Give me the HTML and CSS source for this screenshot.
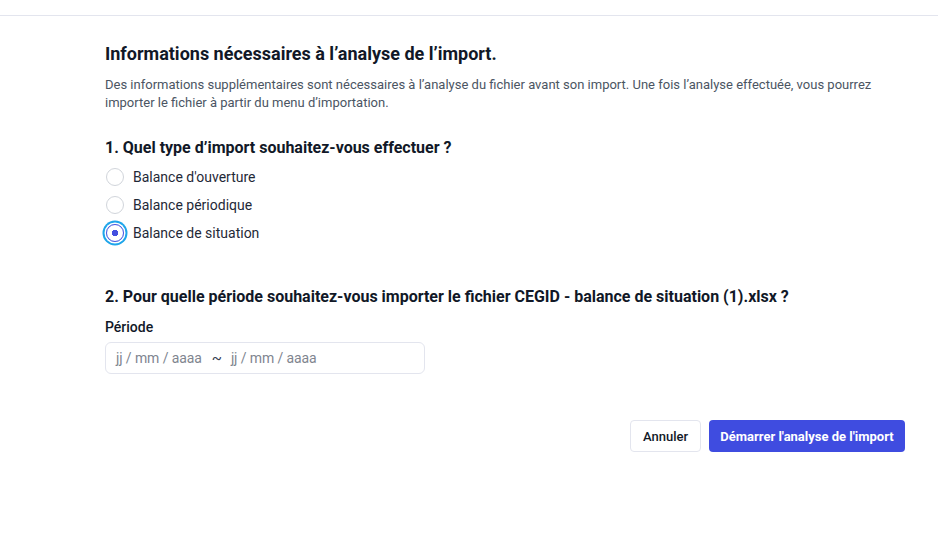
FILE: index.html
```html
<!DOCTYPE html>
<html lang="fr">
<head>
<meta charset="utf-8">
<link rel="stylesheet" href="styles.css">
</head>
<body>
<div class="topbar"></div>
<main class="content">
  <h1 class="title">Informations nécessaires à l’analyse de l’import.</h1>
  <p class="desc">Des informations supplémentaires sont nécessaires à l’analyse du fichier avant son import. Une fois l’analyse effectuée, vous pourrez importer le fichier à partir du menu d’importation.</p>

  <h2 class="q q1">1. Quel type d’import souhaitez-vous effectuer ?</h2>
  <div class="radios">
    <label class="radio"><span class="dot"></span>Balance d'ouverture</label>
    <label class="radio"><span class="dot"></span>Balance périodique</label>
    <label class="radio checked"><span class="dot"></span>Balance de situation</label>
  </div>

  <h2 class="q q2">2. Pour quelle période souhaitez-vous importer le fichier CEGID - balance de situation (1).xlsx ?</h2>
  <div class="field-label">Période</div>
  <div class="range">
    <span class="ph">jj / mm / aaaa</span>
    <span class="sep">~</span>
    <span class="ph">jj / mm / aaaa</span>
  </div>

  <div class="actions">
    <button class="btn btn-secondary">Annuler</button>
    <button class="btn btn-primary">Démarrer l'analyse de l'import</button>
  </div>
</main>
</body>
</html>
```
FILE: styles.css
```css
* { box-sizing: border-box; }
html, body { margin: 0; padding: 0; background: #fff; }
body { font-family: Roboto, "Noto Sans", sans-serif; color: #111827; }

.topbar { height: 16px; border-bottom: 1px solid #e3e5ee; }

.content { width: 800px; margin-left: 105px; padding-top: 26px; }

.title { margin: 0; font-size: 18px; line-height: 24px; font-weight: 700; color: #111827; }
.desc { margin: 10px 0 0; font-size: 13px; line-height: 17.5px; color: #4b5563; }

.q { margin: 0; font-size: 16px; line-height: 24px; font-weight: 700; color: #111827; }
.q1 { margin-top: 25px; }
.q2 { margin-top: 38px; }

.radios { margin-top: 3px; display: flex; flex-direction: column; }
.radio { height: 28px; display: flex; align-items: center; gap: 9px; font-size: 14px; color: #1f2937; }
.dot { width: 18px; height: 18px; margin-left: 1px; border: 1.5px solid #d1d5db; border-radius: 50%; flex: none; background: #fff; }
.radio.checked .dot {
  border: 1.5px solid #4450e0;
  background: radial-gradient(circle, #4450e0 0 3px, #fff 3.5px);
  box-shadow: 0 0 0 1.5px #fff, 0 0 0 3.5px #1ea5ea;
}

.field-label { margin-top: 8px; font-size: 14px; line-height: 20px; font-weight: 500; color: #111827; }
.range {
  margin-top: 5px; width: 320px; height: 32px;
  border: 1px solid #e3e5ee; border-radius: 6px;
  display: flex; align-items: center; padding-left: 10px;
  font-size: 14px; color: #80858f; letter-spacing: -0.1px;
}
.sep { margin: 0 9px 0 10px; color: #374151; font-size: 15px; }

.actions { margin-top: 46px; display: flex; justify-content: flex-end; gap: 8px; }
.btn { height: 32px; border-radius: 4px; font-family: inherit; font-size: 13px; font-weight: 700; padding: 0; cursor: pointer; white-space: nowrap; }
.btn-secondary { width: 71px; background: #fff; border: 1px solid #e3e5ee; color: #111827; font-weight: 500; }
.btn-primary { width: 196px; background: #3f4ce0; border: none; color: #fff; }
```
